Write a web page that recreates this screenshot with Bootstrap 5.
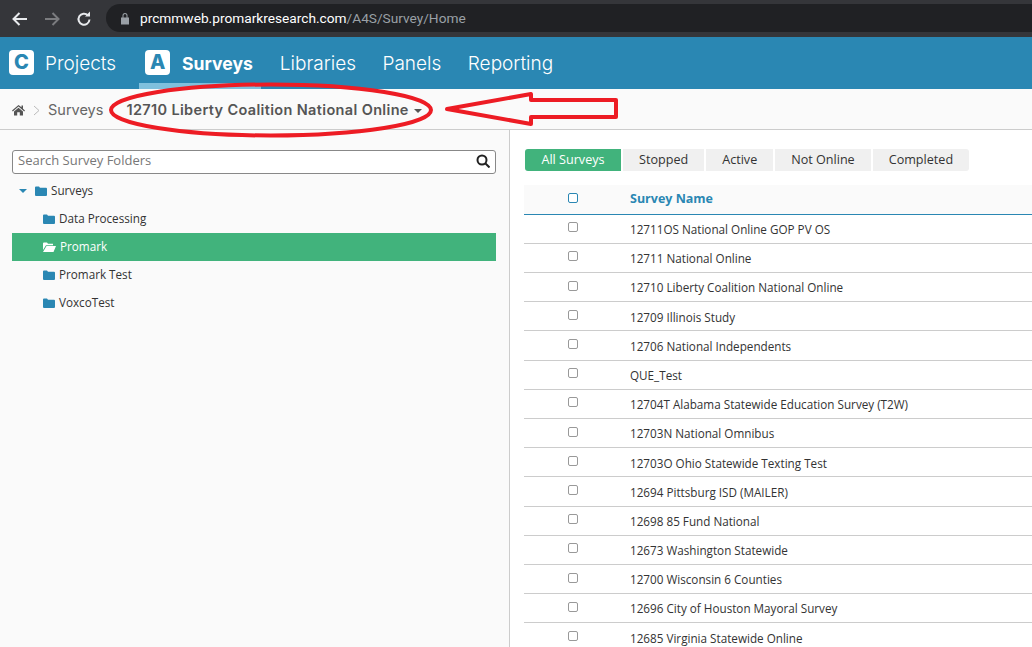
<!DOCTYPE html>
<html lang="en"><head><meta charset="utf-8"><title>Surveys</title>
<link href="https://cdn.jsdelivr.net/npm/bootstrap@5.3.0/dist/css/bootstrap.min.css" rel="stylesheet">
<style>
html,body{height:100%;overflow:hidden}
body{font-family:"Open Sans",sans-serif;font-size:11.7px;color:#333;background:#fff}
.shell{height:647px;position:relative;overflow:hidden}
.chrome{height:37px;background:#35363a;padding-left:11px}
.chrome svg{display:block}
.navgap{margin-left:14px}
.urlpill{margin-left:13px;flex:1;height:28px;background:#202124;border-radius:14px 0 0 14px;padding-left:14px;font-family:"Roboto",sans-serif;font-size:13.7px;color:#9aa0a6;margin-top:4px;margin-bottom:5px}
.lockgap{margin-right:10px}
.urlpill b{font-weight:400;color:#fff}
.appnav{height:52px;background:#2a87b3;padding-left:9px;font-family:"Inter",sans-serif;font-size:19px;color:#fff}
.appnav .tabitem{height:52px;display:flex;align-items:center;font-weight:300;padding-top:3px}
.logo{width:25px;height:25px;border-radius:4px;background:#fff;color:#2a87b3;font-weight:800;display:flex;align-items:center;justify-content:center;font-size:20px;margin-right:11px;margin-top:-5px}
.tabon{position:relative;font-weight:700!important;font-size:17.6px;padding:0 8px 0 6px;margin-left:23px}
.tabon .logo{margin-right:12px}
.tabon::after{content:"";position:absolute;left:0;right:0;bottom:0;height:6px;background:#7fc0dd}
.tabtight{margin-left:19px}
.tabwide{margin-left:26.5px}
.crumbs{height:41px;background:#fafafa;border-bottom:1px solid #ccc;padding-left:12px;padding-top:2px;font-family:"Inter",sans-serif;font-size:14.5px;color:#666}
.crumbnow{font-weight:600;color:#555;margin-left:23px;letter-spacing:.35px}
.caretmini{display:inline-block;border:4px solid transparent;border-top-color:#555;border-bottom:0;margin-left:5px;vertical-align:2px}
.leftpane{width:510px;background:#fafafa;border-right:1px solid #ccc;padding:20px 13px 0 12px;height:518px}
.searchbox{height:24px;border:1px solid #888;border-radius:3px;background:#fff;padding:0 5px 2px;color:#777;font-size:13px}
.treerow{height:28px;display:flex;align-items:center;gap:4px;color:#333}
.lvl0{padding-left:7px;margin-top:3px}
.lvl1{padding-left:31px}
.rowon{background:#41b37c;color:#fff}
.tricaret{border:4px solid transparent;border-top-color:#2a87b3;border-bottom:0;margin-right:4px}
.rightpane{flex:1;padding:19px 0 0 14px;min-width:0}
.pillbar{gap:2px;margin-left:1px;margin-bottom:14px}
.pillbtn{height:22px;padding:0 16px;background:#f0f0f0;font-size:12.6px;line-height:22px;color:#333;border:0;border-radius:0}
.pillbtn.on{background:#41b37c;color:#fff;width:96px;padding:0;text-align:center;border-radius:3px 0 0 3px}
.pillbtn.end{border-radius:0 3px 3px 0}
.surveyhead{height:29.7px;background:#fafafa;border-bottom:1px solid #2a87b3;font-weight:700;color:#2a87b3;font-size:12.5px}
.surveyrow{height:29.2px;border-bottom:1px solid #ccc;color:#333;padding-top:2px}
.checkcell{width:106px;padding-left:44px;flex:none}
.tick{display:block;width:10px;height:10px;border:1px solid #999;border-radius:2px;background:#fff;margin-top:-3px}
.surveyrow .tick{margin-top:-5px}
.surveyhead .tick{border-color:#2a87b3}
.overlay{position:absolute;left:0;top:0;pointer-events:none}
</style></head><body>
<div class="shell">
<div class="chrome d-flex align-items-center">
<svg width="18" height="16" viewBox="0 0 18 16" fill="none" stroke="#e8eaed" stroke-width="2"><path d="M16 8H3M8.500 2 2.500 8l6 6"/></svg>
<svg class="navgap" width="18" height="16" viewBox="0 0 18 16" fill="none" stroke="#7b7c7f" stroke-width="2"><path d="M2 8h13M9.500 2l6 6-6 6"/></svg>
<svg class="navgap" width="18" height="18" viewBox="0 0 18 18" fill="none" stroke="#e8eaed" stroke-width="2"><path d="M14.500 9.500a5.500 5.500 0 1 1-1.600-4.200"/><path d="M15 1.500v5h-5" fill="#e8eaed" stroke="none"/></svg>
<div class="urlpill d-flex align-items-center">
<svg class="lockgap" width="10" height="13" viewBox="0 0 10 13" fill="#9aa0a6"><path d="M1 5.500h8v7H1zM2.500 5.500V3.500a2.500 2.500 0 0 1 5 0v2H6.500V3.500a1.500 1.500 0 0 0-3 0v2z"/></svg>
<span><b>prcmmweb.promarkresearch.com</b>/A4S/Survey/Home</span></div>
</div>
<nav class="appnav d-flex">
<div class="tabitem"><span class="logo">C</span>Projects</div>
<div class="tabitem tabon"><span class="logo">A</span>Surveys</div>
<div class="tabitem tabtight">Libraries</div>
<div class="tabitem tabwide">Panels</div>
<div class="tabitem tabwide">Reporting</div>
</nav>
<div class="crumbs d-flex align-items-center">
<svg width="13" height="12" viewBox="0 0 13 12" fill="#555"><path d="M6.500 1 0 6.500l.8.900L6.500 2.600l5.700 4.800.8-.9-2-1.700V1.500H9.500v1.700zM2 7.500V11.500h3.200V8.300h2.600v3.200H11V7.500L6.500 3.700z"/></svg>
<svg class="mx-2" width="7" height="11" viewBox="0 0 7 11" fill="none" stroke="#bbb"><path d="m1 1 5 4.500-5 4.500"/></svg>
<span>Surveys</span>
<span class="crumbnow">12710 Liberty Coalition National Online<i class="caretmini"></i></span>
</div>
<div class="d-flex">
<aside class="leftpane">
<div class="searchbox d-flex align-items-center justify-content-between"><span>Search Survey Folders</span>
<svg width="14" height="14" viewBox="0 0 14 14" fill="none" stroke="#222" stroke-width="2"><circle cx="6" cy="6" r="4.500"/><path d="m9.500 9.500 4 4"/></svg></div>
<div class="treerow lvl0"><i class="tricaret"></i><svg width="12" height="10" viewBox="0 0 12 10" fill="#2a87b3"><path d="M0 1.500a1 1 0 0 1 1-1h3l1 1.300h6a1 1 0 0 1 1 1V9a1 1 0 0 1-1 1H1a1 1 0 0 1-1-1z"/></svg><span>Surveys</span></div>
<div class="treerow lvl1"><svg width="12" height="10" viewBox="0 0 12 10" fill="#2a87b3"><path d="M0 1.500a1 1 0 0 1 1-1h3l1 1.300h6a1 1 0 0 1 1 1V9a1 1 0 0 1-1 1H1a1 1 0 0 1-1-1z"/></svg><span>Data Processing</span></div>
<div class="treerow lvl1 rowon"><svg width="13" height="10" viewBox="0 0 13 10" fill="#fff"><path d="M0 1.500a1 1 0 0 1 1-1h3l1 1.300h5v1.500H3L0 8zM3.500 4H13l-2.500 6H0z"/></svg><span>Promark</span></div>
<div class="treerow lvl1"><svg width="12" height="10" viewBox="0 0 12 10" fill="#2a87b3"><path d="M0 1.500a1 1 0 0 1 1-1h3l1 1.300h6a1 1 0 0 1 1 1V9a1 1 0 0 1-1 1H1a1 1 0 0 1-1-1z"/></svg><span>Promark Test</span></div>
<div class="treerow lvl1"><svg width="12" height="10" viewBox="0 0 12 10" fill="#2a87b3"><path d="M0 1.500a1 1 0 0 1 1-1h3l1 1.300h6a1 1 0 0 1 1 1V9a1 1 0 0 1-1 1H1a1 1 0 0 1-1-1z"/></svg><span>VoxcoTest</span></div>
</aside>
<main class="rightpane">
<div class="pillbar d-flex">
<span class="pillbtn on">All Surveys</span><span class="pillbtn">Stopped</span><span class="pillbtn">Active</span><span class="pillbtn">Not Online</span><span class="pillbtn end">Completed</span>
</div>
<div class="surveyhead d-flex align-items-center"><div class="checkcell"><i class="tick"></i></div><div>Survey Name</div></div>
<div class="surveyrow d-flex align-items-center"><div class="checkcell"><i class="tick"></i></div><div>12711OS National Online GOP PV OS</div></div>
<div class="surveyrow d-flex align-items-center"><div class="checkcell"><i class="tick"></i></div><div>12711 National Online</div></div>
<div class="surveyrow d-flex align-items-center"><div class="checkcell"><i class="tick"></i></div><div>12710 Liberty Coalition National Online</div></div>
<div class="surveyrow d-flex align-items-center"><div class="checkcell"><i class="tick"></i></div><div>12709 Illinois Study</div></div>
<div class="surveyrow d-flex align-items-center"><div class="checkcell"><i class="tick"></i></div><div>12706 National Independents</div></div>
<div class="surveyrow d-flex align-items-center"><div class="checkcell"><i class="tick"></i></div><div>QUE_Test</div></div>
<div class="surveyrow d-flex align-items-center"><div class="checkcell"><i class="tick"></i></div><div>12704T Alabama Statewide Education Survey (T2W)</div></div>
<div class="surveyrow d-flex align-items-center"><div class="checkcell"><i class="tick"></i></div><div>12703N National Omnibus</div></div>
<div class="surveyrow d-flex align-items-center"><div class="checkcell"><i class="tick"></i></div><div>12703O Ohio Statewide Texting Test</div></div>
<div class="surveyrow d-flex align-items-center"><div class="checkcell"><i class="tick"></i></div><div>12694 Pittsburg ISD (MAILER)</div></div>
<div class="surveyrow d-flex align-items-center"><div class="checkcell"><i class="tick"></i></div><div>12698 85 Fund National</div></div>
<div class="surveyrow d-flex align-items-center"><div class="checkcell"><i class="tick"></i></div><div>12673 Washington Statewide</div></div>
<div class="surveyrow d-flex align-items-center"><div class="checkcell"><i class="tick"></i></div><div>12700 Wisconsin 6 Counties</div></div>
<div class="surveyrow d-flex align-items-center"><div class="checkcell"><i class="tick"></i></div><div>12696 City of Houston Mayoral Survey</div></div>
<div class="surveyrow d-flex align-items-center"><div class="checkcell"><i class="tick"></i></div><div>12685 Virginia Statewide Online</div></div>
</main>
</div>
<svg class="overlay" width="1032" height="647" fill="none" stroke="#ed1c24" stroke-width="4">
<ellipse cx="271" cy="110" rx="160" ry="25.500"/>
<path stroke-linejoin="round" d="M447 109 531 94V100H616V117H531V124Z"/>
</svg>
</div>
</body></html>
